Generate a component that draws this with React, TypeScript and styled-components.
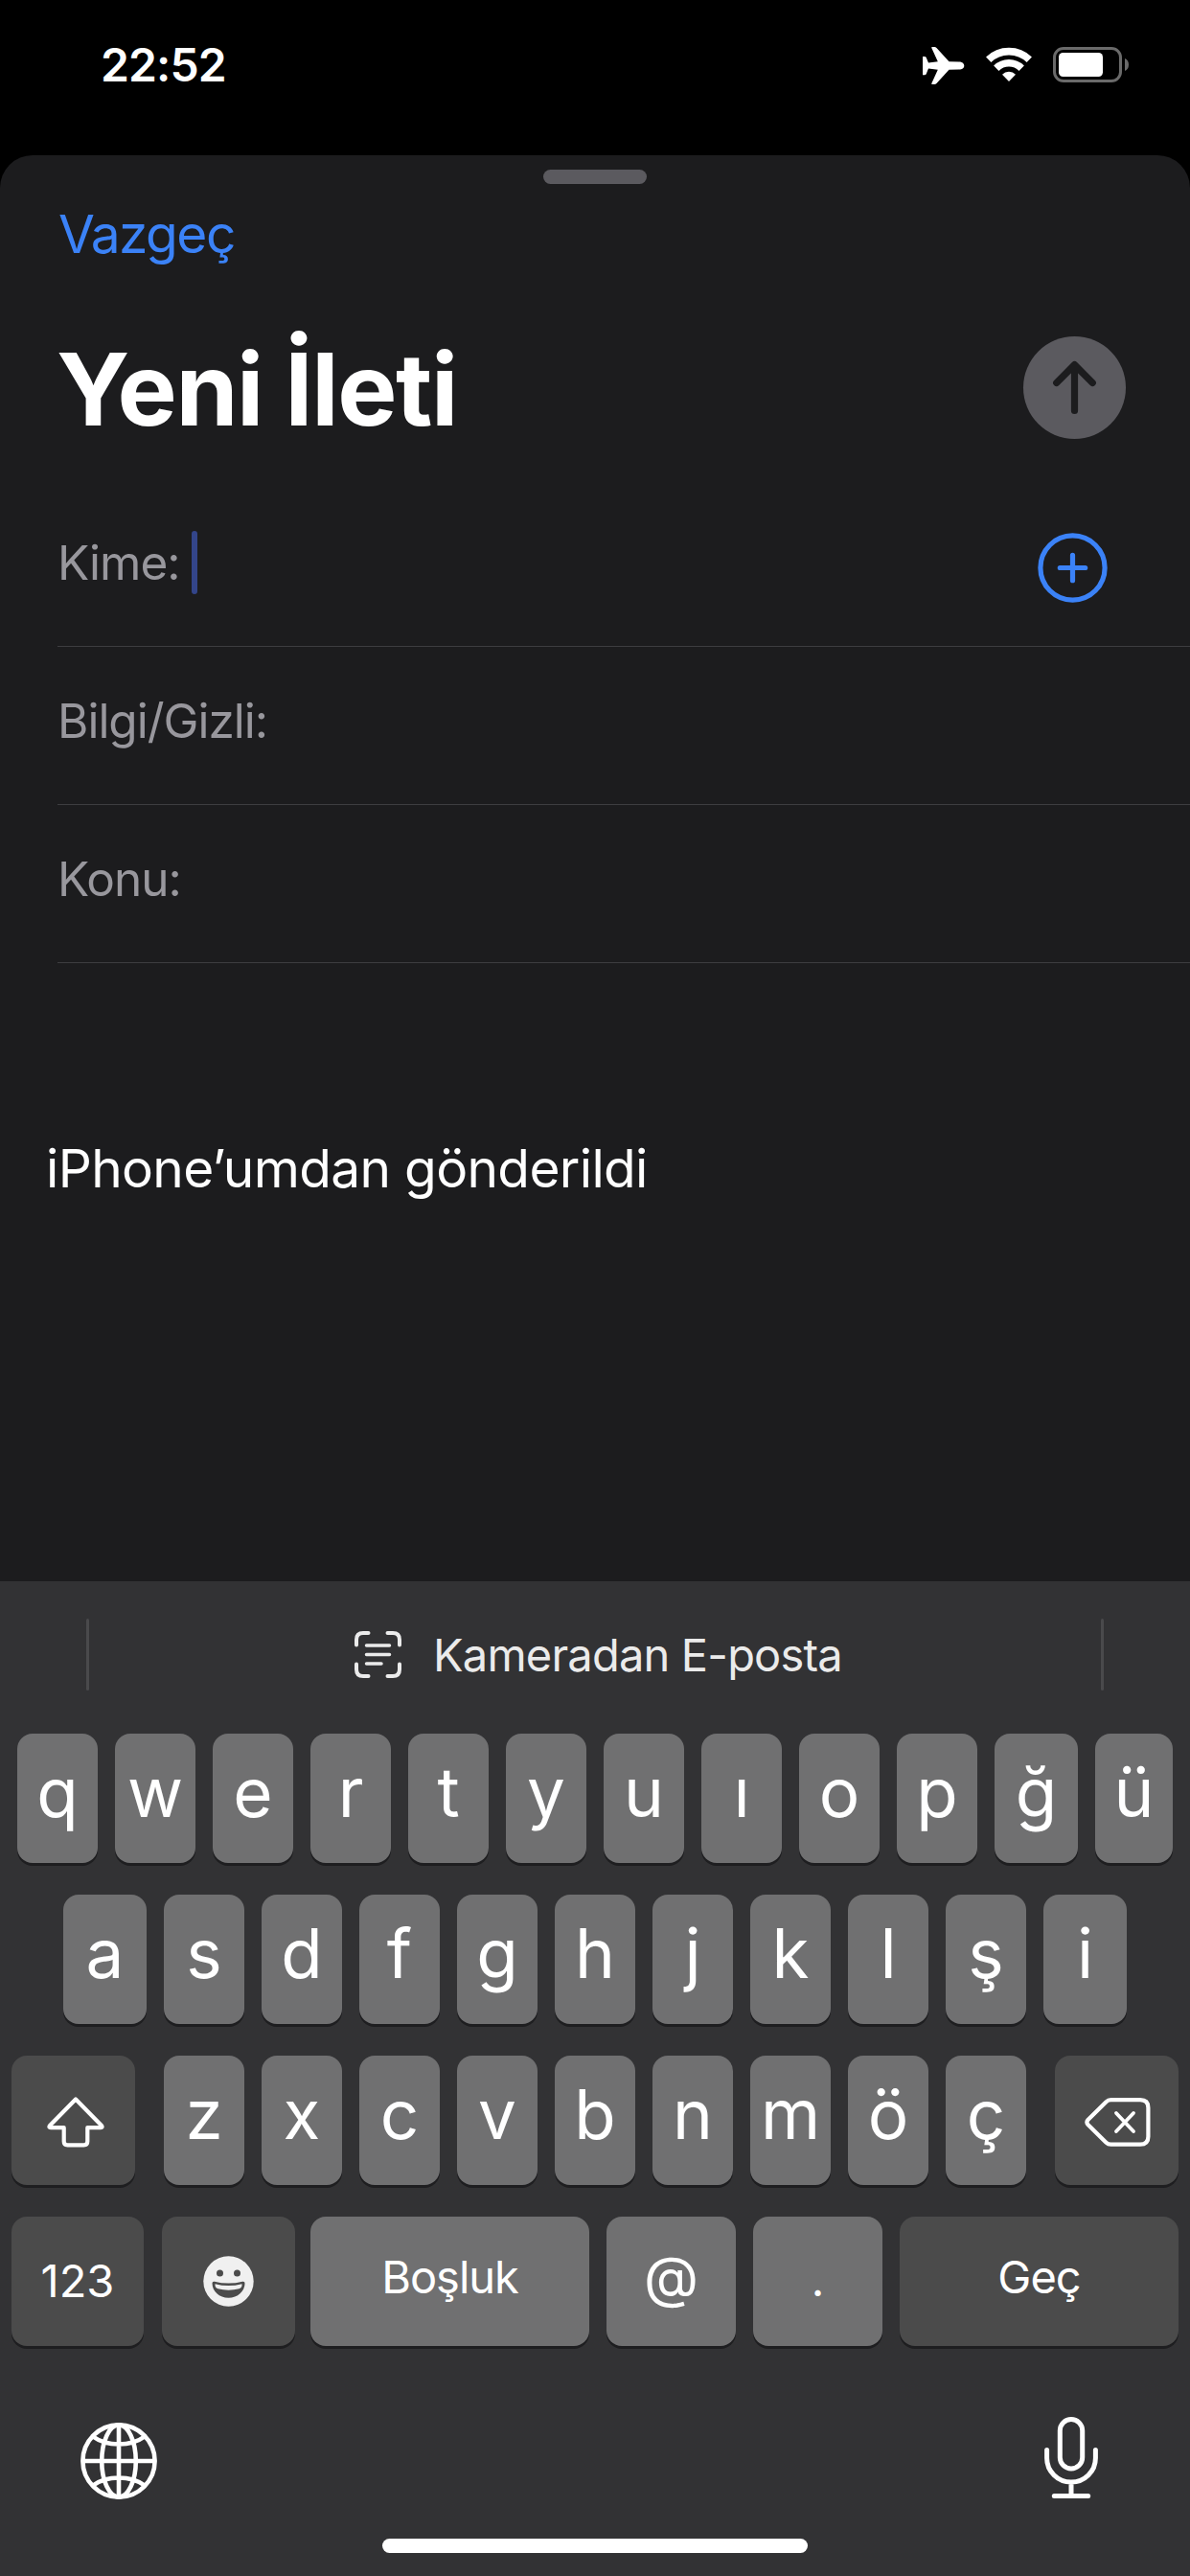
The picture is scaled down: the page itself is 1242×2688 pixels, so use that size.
import React from "react";
import styled, { createGlobalStyle } from "styled-components";

const color = {
  sheet: "#1c1c1e",
  keyboard: "#323234",
  accent: "#3b82f7",
  label: "#98979d",
  line: "#3d3d40",
  key: "#707071",
  darkKey: "#4b4b4b",
};

const GlobalStyle = createGlobalStyle`
  * { box-sizing: border-box; }
  html, body { margin: 0; background: #000; }
  body { font-family: Inter, "Liberation Sans", sans-serif; -webkit-font-smoothing: antialiased; }
  svg { display: block; flex: none; }
  button { border: 0; padding: 0; background: none; font: inherit; color: inherit; }
`;

const Screen = styled.div`
  width: 1242px;
  height: 2688px;
  display: flex;
  flex-direction: column;
  overflow: hidden;
  background: #000;
  color: #fff;
`;

const StatusBar = styled.header`
  height: 162px;
  flex: none;
  display: flex;
  justify-content: space-between;
  padding: 0 63px 0 105px;
`;

const Clock = styled.time`
  margin-top: 38px;
  height: 60px;
  font-size: 48px;
  line-height: 60px;
  font-weight: 600;
  letter-spacing: -0.9px;
`;

const StatusIcons = styled.div`
  display: flex;
  align-items: flex-start;
  margin-top: 49px;
  gap: 22px;
`;

const Sheet = styled.main`
  flex: 1;
  display: flex;
  flex-direction: column;
  border-radius: 34px 34px 0 0;
  background: ${color.sheet};
`;

const Grabber = styled.div`
  width: 108px;
  height: 15px;
  margin: 15px auto 0;
  border-radius: 8px;
  background: #5b5a5f;
`;

const CancelButton = styled.button`
  align-self: flex-start;
  margin: 19px 0 0 61px;
  font-size: 55px;
  line-height: 66px;
  letter-spacing: -1.5px;
  color: ${color.accent};
`;

const TitleRow = styled.div`
  display: flex;
  justify-content: space-between;
  align-items: flex-start;
  height: 126px;
  margin-top: 66px;
  padding: 0 67px 0 59px;
`;

const Title = styled.h1`
  margin: 0;
  font-size: 104.5px;
  line-height: 126px;
  font-weight: 700;
  letter-spacing: -1.4px;
`;

const SendButton = styled.button`
  width: 107px;
  height: 107px;
  margin-top: 8px;
  border-radius: 50%;
  background: #5b5a5f;
`;

const Fields = styled.section`
  margin-top: 41px;
  padding-left: 60px;
`;

const FieldRow = styled.div`
  display: flex;
  align-items: center;
  height: 165px;
  padding: 0 86px 10px 0;
  border-bottom: 1px solid ${color.line};
`;

const FieldLabel = styled.label`
  font-size: 49.5px;
  line-height: 60px;
  letter-spacing: -1px;
  color: ${color.label};
`;

const Caret = styled.span`
  width: 6px;
  height: 66px;
  margin-left: 12px;
  border-radius: 3px;
  background: #33458a;
`;

const AddButton = styled.button`
  margin: 11px 0 0 auto;
`;

const MessageBody = styled.p`
  margin: 181px 0 0 48px;
  font-size: 55px;
  line-height: 66px;
  letter-spacing: -0.65px;
`;

const Keyboard = styled.section`
  height: 1038px;
  flex: none;
  display: flex;
  flex-direction: column;
  background: ${color.keyboard};
`;

const SuggestionBar = styled.div`
  height: 159px;
  flex: none;
  display: flex;
  justify-content: space-between;
  padding: 39px 90px 45px;
`;

const Divider = styled.span`
  width: 3px;
  border-radius: 2px;
  background: #4a4a4c;
`;

const Suggestion = styled.div`
  display: flex;
  align-items: center;
  gap: 33px;
  margin-left: 7px;
  font-size: 47px;
  line-height: 60px;
  letter-spacing: -0.8px;
  color: #ebebeb;
`;

const KeyRows = styled.div`
  display: flex;
  flex-direction: column;
  gap: 33px;
`;

const KeyRow = styled.div<{ $inset: number }>`
  display: flex;
  gap: 18px;
  padding-left: ${(p) => p.$inset}px;
`;

const Key = styled.button<{ $w?: number; $dark?: boolean; $before?: number }>`
  width: ${(p) => p.$w ?? 84}px;
  height: 135px;
  flex: none;
  display: flex;
  align-items: center;
  justify-content: center;
  margin-left: ${(p) => p.$before ?? 0}px;
  padding-bottom: 13px;
  border-radius: 16px;
  background: ${(p) => (p.$dark ? color.darkKey : color.key)};
  box-shadow: 0 3px 0 #1e1e20;
  font-size: 71px;
  font-weight: 375;
  line-height: 90px;
`;

const IconKey = styled(Key)<{ $top?: number; $left?: number }>`
  padding: ${(p) => p.$top ?? 0}px 0 0 ${(p) => p.$left ?? 0}px;
`;

const TextKey = styled(Key)<{ $lift?: number; $size?: number; $tracking?: number }>`
  padding-bottom: ${(p) => p.$lift ?? 9}px;
  font-size: ${(p) => p.$size ?? 47}px;
  font-weight: 400;
  letter-spacing: ${(p) => p.$tracking ?? 0}px;
`;

const BottomBar = styled.div`
  flex: 1;
  display: flex;
  justify-content: space-between;
  align-items: flex-start;
  padding: 74px 96px 0 84px;
`;

const Globe = styled.svg`
  margin-top: 6px;
`;

const HomeIndicator = styled.div`
  width: 444px;
  height: 15px;
  flex: none;
  margin: 0 auto 24px;
  border-radius: 8px;
  background: #fff;
`;

const letters = (text: string) => text.split("");
const firstRowWidths: Record<string, number> = { ğ: 87, ü: 81 };
const secondRowWidths: Record<string, number> = { a: 87, i: 87 };

const AirplaneIcon = () => (
  <svg width="44" height="39" viewBox="0 0 44 39" fill="#fff">
    <path d="M38 15.4C41 15.4 43.300 17 43.300 19.500S41 23.600 38 23.600L27.500 23.800L14.500 38Q13.500 39 12.300 39H10Q8.900 39 9.300 38L15.800 23.800L6 22.600L3.800 28Q3.300 29.200 2 29.200H0V10H2Q3.300 10 3.800 11.200L6 16.400L15.800 15.200L9.300 1Q8.900 0 10 0H12.300Q13.500 0 14.500 1L27.500 15.200Z" />
  </svg>
);

const WifiIcon = () => (
  <svg width="48" height="36" viewBox="0 0 48 36" fill="none" stroke="#fff" strokeWidth="7.6">
    <path d="M2.700 13.300A30.500 30.500 0 0 1 45.300 13.300" />
    <path d="M10.800 22.200A18.800 18.800 0 0 1 37.200 22.200" />
    <path d="M24 36L17 28.800Q20 25.800 24 25.800T31 28.800Z" fill="#fff" stroke="none" />
  </svg>
);

const BatteryIcon = () => (
  <svg width="80" height="37" viewBox="0 0 80 37">
    <rect x="1.500" y="1.500" width="69" height="34" rx="9.500" fill="none" stroke="#6a6a6a" strokeWidth="3" />
    <rect x="6" y="6" width="46" height="25" rx="4.500" fill="#fff" />
    <path d="M75 12Q79 13.800 79 18.500T75 25Z" fill="#6a6a6a" />
  </svg>
);

const ArrowUpIcon = () => (
  <svg width="107" height="107" viewBox="0 0 107 107" fill="none" stroke={color.sheet} strokeWidth="7.200" strokeLinecap="round" strokeLinejoin="round">
    <path d="M53.500 77.500V30M34.700 48.500L53.500 29.600L72.300 48.500" />
  </svg>
);

const PlusCircleIcon = () => (
  <svg width="73" height="73" viewBox="0 0 73 73" fill="none" stroke={color.accent} strokeWidth="5.200" strokeLinecap="round">
    <circle cx="36.500" cy="36.500" r="33.600" />
    <path d="M23.300 36.500H49.700M36.500 23.300V49.700" />
  </svg>
);

const ScanTextIcon = () => (
  <svg width="49" height="49" viewBox="0 0 49 49" fill="none" stroke="#ebebeb" strokeWidth="4" strokeLinecap="round">
    <path d="M2 14.500V9Q2 2 9 2H14.500M34.500 2H40Q47 2 47 9V14.500M47 34.500V40Q47 47 40 47H34.500M14.500 47H9Q2 47 2 40V34.500" />
    <path strokeWidth="3.500" d="M12.500 15H36.500M12.500 24.500H36.500M12.500 34H28" />
  </svg>
);

const ShiftIcon = () => (
  <svg width="60" height="53" viewBox="0 0 60 53" fill="none" stroke="#fff" strokeWidth="4.200" strokeLinejoin="round">
    <path d="M30 2.500L57 30Q58.500 32.200 56 32.200H42.300V46.500Q42.300 50.300 38.500 50.300H21.500Q17.700 50.300 17.700 46.500V32.200H4Q1.500 32.200 3 30Z" />
  </svg>
);

const BackspaceIcon = () => (
  <svg width="69" height="51" viewBox="0 0 69 51" fill="none" stroke="#fff" strokeWidth="4.200" strokeLinecap="round" strokeLinejoin="round">
    <path d="M27.500 2.200H58Q66.400 2.200 66.400 10.500V40.500Q66.400 48.700 58 48.700H27.500Q24.500 48.700 22.500 46.700L3.500 28Q1.300 25.500 3.500 23L22.500 4.200Q24.500 2.200 27.500 2.200Z" />
    <path d="M33 16L51 35M51 16L33 35" strokeWidth="3.800" />
  </svg>
);

const EmojiIcon = () => (
  <svg width="53" height="53" viewBox="0 0 53 53">
    <circle cx="26.500" cy="26.500" r="26.200" fill="#f0f0f0" />
    <ellipse cx="17.500" cy="18" rx="3.500" ry="3.600" fill={color.darkKey} />
    <ellipse cx="35.500" cy="18" rx="3.500" ry="3.600" fill={color.darkKey} />
    <path d="M9.500 28.500Q9.500 26.300 11.800 26.700Q26.500 30.500 41.200 26.700Q43.500 26.300 43.500 28.500C43.500 37 36 43.800 26.500 43.800S9.500 37 9.500 28.500Z" fill={color.darkKey} />
    <path d="M12.500 29.200Q26.500 33 40.500 29.200Q41 33 37.500 34.300Q26.500 37 15.500 34.300Q12 33 12.500 29.200Z" fill="#f0f0f0" />
  </svg>
);

const GlobeIcon = () => (
  <Globe width="80" height="80" viewBox="0 0 80 80" fill="none" stroke="#fff" strokeWidth="4.600">
    <circle cx="40" cy="40" r="37.600" />
    <ellipse cx="40" cy="40" rx="17.800" ry="37.600" />
    <path d="M40 2.500V77.500M2.500 40H77.500M13 14.500Q24 22.500 40 22.500T67 14.500M13 65.500Q24 57.500 40 57.500T67 65.500" />
  </Globe>
);

const MicIcon = () => (
  <svg width="56" height="85" viewBox="0 0 56 85" fill="none" stroke="#fff" strokeWidth="5" strokeLinecap="round">
    <rect x="16.300" y="2.500" width="23.400" height="51.500" rx="11.700" />
    <path d="M2.600 34.500V43A25.400 25 0 0 0 53.400 43V34.500M28 68V82M10.300 82.400H45.700" />
  </svg>
);

export default function App() {
  return (
    <Screen>
      <GlobalStyle />
      <StatusBar>
        <Clock>22:52</Clock>
        <StatusIcons>
          <AirplaneIcon />
          <WifiIcon />
          <BatteryIcon />
        </StatusIcons>
      </StatusBar>

      <Sheet>
        <Grabber />
        <CancelButton>Vazgeç</CancelButton>
        <TitleRow>
          <Title>Yeni İleti</Title>
          <SendButton aria-label="Gönder">
            <ArrowUpIcon />
          </SendButton>
        </TitleRow>
        <Fields>
          <FieldRow>
            <FieldLabel>Kime:</FieldLabel>
            <Caret />
            <AddButton aria-label="Ekle">
              <PlusCircleIcon />
            </AddButton>
          </FieldRow>
          <FieldRow>
            <FieldLabel>Bilgi/Gizli:</FieldLabel>
          </FieldRow>
          <FieldRow>
            <FieldLabel>Konu:</FieldLabel>
          </FieldRow>
        </Fields>
        <MessageBody>iPhone’umdan gönderildi</MessageBody>
      </Sheet>

      <Keyboard>
        <SuggestionBar>
          <Divider />
          <Suggestion>
            <ScanTextIcon />
            <span>Kameradan E-posta</span>
          </Suggestion>
          <Divider />
        </SuggestionBar>
        <KeyRows>
          <KeyRow $inset={18}>
            {letters("qwertyuıopğü").map((c) => (
              <Key key={c} $w={firstRowWidths[c]}>{c}</Key>
            ))}
          </KeyRow>
          <KeyRow $inset={66}>
            {letters("asdfghjklşi").map((c) => (
              <Key key={c} $w={secondRowWidths[c]}>{c}</Key>
            ))}
          </KeyRow>
          <KeyRow $inset={12}>
            <IconKey $w={129} $dark $top={3} $left={4} aria-label="Shift">
              <ShiftIcon />
            </IconKey>
            {letters("zxcvbnmöç").map((c, i) => (
              <Key key={c} $before={i === 0 ? 12 : 0}>{c}</Key>
            ))}
            <IconKey $w={129} $dark $before={12} $top={3} $left={1} aria-label="Sil">
              <BackspaceIcon />
            </IconKey>
          </KeyRow>
          <KeyRow $inset={12}>
            <TextKey $w={138} $dark $lift={1}>123</TextKey>
            <IconKey $w={139} $dark $before={1} aria-label="Emoji">
              <EmojiIcon />
            </IconKey>
            <TextKey $w={291} $before={-2} $tracking={-1}>Boşluk</TextKey>
            <TextKey $w={135} $size={59}>@</TextKey>
            <TextKey $w={135} $lift={3}>.</TextKey>
            <TextKey $w={291} $dark $tracking={-1}>Geç</TextKey>
          </KeyRow>
        </KeyRows>
        <BottomBar>
          <GlobeIcon />
          <MicIcon />
        </BottomBar>
        <HomeIndicator />
      </Keyboard>
    </Screen>
  );
}
